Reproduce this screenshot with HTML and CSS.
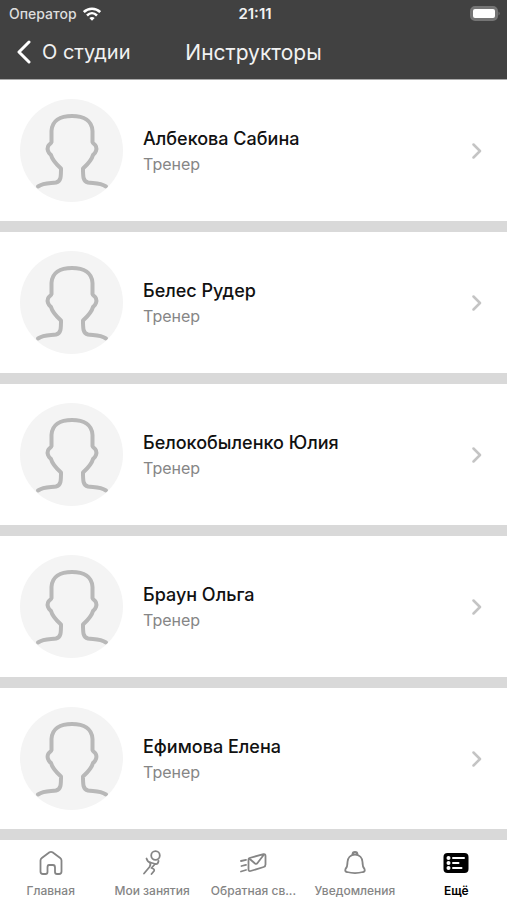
FILE: index.html
```html
<!DOCTYPE html>
<html lang="ru">
<head>
  <meta charset="UTF-8">
  <title>Инструкторы</title>
  <meta name="viewport" content="width=device-width, initial-scale=1.0">
  <link rel="stylesheet" href="styles.css">
</head>
<body>

  <!-- Shared icons -->
  <svg class="sprite" aria-hidden="true">
    <symbol id="person" viewBox="0 0 103 103">
      <path d="M18 87.500C24 83.500 31 84.500 36 83.500C41 82 41 78 41 69.500C36 65 32 60 31 56C28 54 27 50 28 47.500C29 45 31 45 31.500 43V32C32 22 40 17 52 17C64 17 72 22 72.500 32V43C73 45 75 45 76 47.500C77 50 76 54 73 56C72 60 68 65 63 69.500C63 78 63 82 68 83.500C73 84.500 80 83.500 86 87.500"/>
    </symbol>
    <symbol id="chevron" viewBox="0 0 10 16">
      <path d="M1.500 1.500L8 8L1.500 14.500"/>
    </symbol>
  </svg>

  <header class="header">
    <div class="status">
      <div class="carrier">
        <span>Оператор</span>
        <svg class="wifi" viewBox="0 0 18 14">
          <path d="M.8 5C5.300 .5 12.700 .5 17.200 5M4 8.500C7 5.500 11 5.500 14 8.500"/>
          <path class="dot" d="M6.300 11Q9 8.800 11.700 11L9 13.700Z"/>
        </svg>
      </div>
      <span class="time">21:11</span>
      <svg class="battery" viewBox="0 0 31 15">
        <rect class="case" x="1" y="1" width="26" height="13" rx="4"/>
        <rect class="level" x="3" y="3" width="22" height="9" rx="2"/>
        <path class="tip" d="M28.500 5.500Q31 7.500 28.500 9.500Z"/>
      </svg>
    </div>
    <nav class="navbar">
      <a class="back" href="#">
        <svg viewBox="0 0 16 24"><path d="M13 2L3 12L13 22"/></svg>
        <span>О студии</span>
      </a>
      <h1>Инструкторы</h1>
    </nav>
  </header>

  <main class="list">
    <a class="trainer" href="#">
      <svg class="avatar"><use href="#person"/></svg>
      <div class="info">
        <h2>Албекова Сабина</h2>
        <p>Тренер</p>
      </div>
      <svg class="chevron"><use href="#chevron"/></svg>
    </a>
    <a class="trainer" href="#">
      <svg class="avatar"><use href="#person"/></svg>
      <div class="info">
        <h2>Белес Рудер</h2>
        <p>Тренер</p>
      </div>
      <svg class="chevron"><use href="#chevron"/></svg>
    </a>
    <a class="trainer" href="#">
      <svg class="avatar"><use href="#person"/></svg>
      <div class="info">
        <h2>Белокобыленко Юлия</h2>
        <p>Тренер</p>
      </div>
      <svg class="chevron"><use href="#chevron"/></svg>
    </a>
    <a class="trainer" href="#">
      <svg class="avatar"><use href="#person"/></svg>
      <div class="info">
        <h2>Браун Ольга</h2>
        <p>Тренер</p>
      </div>
      <svg class="chevron"><use href="#chevron"/></svg>
    </a>
    <a class="trainer" href="#">
      <svg class="avatar"><use href="#person"/></svg>
      <div class="info">
        <h2>Ефимова Елена</h2>
        <p>Тренер</p>
      </div>
      <svg class="chevron"><use href="#chevron"/></svg>
    </a>
  </main>

  <!-- Bottom tabs -->
  <nav class="tabs">
    <a class="tab" href="#">
      <svg viewBox="0 0 28 28">
        <path d="M3.500 11.500Q3.500 10 4.800 9L12.500 3.300Q14 2.300 15.500 3.300L23.200 9Q24.500 10 24.500 11.500V22.500Q24.500 25 22 25H20Q18 25 18 23V18.500Q18 16 16 16H12Q10.500 16 10.500 18.500V23Q10.500 25 8.500 25H6Q3.500 25 3.500 22.500Z"/>
      </svg>
      <span>Главная</span>
    </a>
    <a class="tab" href="#">
      <svg viewBox="0 0 28 28">
        <circle cx="17.500" cy="6.500" r="4.300"/>
        <path d="M8.500 9.500Q9.500 13 12.500 13.500L17.500 15Q20 15.500 20.500 12M12 13.500Q13 15.500 11.500 18L6 24.500M17 15L13.500 19Q17 20 16 22L13.500 25"/>
      </svg>
      <span>Мои занятия</span>
    </a>
    <a class="tab" href="#">
      <svg viewBox="0 0 28 28">
        <path d="M10.500 9L24.500 5.200Q26.500 4.800 26.500 7V15.500Q26.500 17.500 24.700 18L11.500 22Q9.500 22.500 9.500 20.500V10.500Q9.500 9.300 10.500 9ZM10.500 9.800L16 14.500Q17.500 15.500 18.500 14L25 5.500M2 12L7 10.800M2.500 17L7 15.800M2 22.500L7 21"/>
      </svg>
      <span>Обратная св...</span>
    </a>
    <a class="tab" href="#">
      <svg viewBox="0 0 28 28">
        <path d="M14 5.500C18.500 5.500 21.500 9 21.500 13C21.500 17 22 18.500 23.500 20Q24.500 22.500 22 23Q14 25.200 6 23Q3.500 22.500 4.500 20C6 18.500 6.500 17 6.500 13C6.500 9 9.500 5.500 14 5.500ZM11.500 5.500Q11.500 3 14 3Q16.500 3 16.500 5.500"/>
      </svg>
      <span>Уведомления</span>
    </a>
    <a class="tab active" href="#">
      <svg viewBox="0 0 28 28">
        <rect class="card" x="1.500" y="4" width="25" height="20" rx="4"/>
        <g class="points">
          <circle cx="6.500" cy="9" r="2"/>
          <circle cx="6.500" cy="14" r="2"/>
          <circle cx="6.500" cy="19" r="2"/>
        </g>
        <path class="lines" d="M11 9H22M11 14H16.500M11 19H19.500"/>
      </svg>
      <span>Ещё</span>
    </a>
  </nav>

</body>
</html>
```
FILE: styles.css
```css
* { box-sizing: border-box; }

body {
  display: flex;
  flex-direction: column;
  min-height: 100vh;
  margin: 0;
  background-color: #fff;
  color: #111;
  font-family: Inter, "Liberation Sans", sans-serif;
}

a { color: inherit; text-decoration: none; }
h1, h2, p { margin: 0; }

svg {
  flex: none;
  fill: none;
  stroke: currentColor;
  stroke-linecap: round;
  stroke-linejoin: round;
}

.sprite { display: none; }

/* Header */
.header {
  background-color: #414141;
  border-bottom: 1px solid #aaa;
  color: #f2f2f2;
}

.status {
  display: grid;
  grid-template-columns: 1fr auto 1fr;
  align-items: center;
  height: 27px;
  padding: 0 6px 0 9px;
  font-size: 15px;
}

.carrier {
  display: flex;
  align-items: center;
  gap: 6px;
  color: #ddd;
  font-size: 14px;
  font-weight: 500;
}

.time { font-weight: 600; }

.wifi { width: 18px; height: 14px; color: #fff; stroke-width: 2.5; stroke-linecap: butt; }
.wifi .dot { fill: #fff; stroke: none; }

.battery { width: 31px; height: 15px; justify-self: end; }
.battery .case { stroke: #757575; stroke-width: 2; fill: #757575; }
.battery .level { fill: #fff; stroke: none; }
.battery .tip { fill: #757575; stroke: none; }

.navbar {
  display: grid;
  grid-template-columns: 1fr auto 1fr;
  align-items: center;
  height: 52px;
  padding: 0 16px 2px;
}

.back { display: flex; align-items: center; gap: 10px; font-size: 20px; }
.back svg { width: 16px; height: 24px; color: #fff; stroke-width: 3; }
.navbar h1 { font-size: 21px; font-weight: 400; }

/* Trainer list */
.list { flex: 1; }

.trainer {
  display: flex;
  align-items: center;
  gap: 20px;
  padding: 19px 25px 19px 20px;
  border-bottom: 11px solid #d9d9d9;
}

.avatar {
  width: 103px;
  height: 103px;
  border-radius: 50%;
  background-color: #f4f4f4;
  color: #b8b8b8;
  stroke-width: 4;
}

.info { flex: 1; min-width: 0; }
.info h2 { font-size: 18px; line-height: 26px; font-weight: 500; }
.info p { font-size: 16px; line-height: 24px; color: #868686; }

.chevron { width: 10px; height: 16px; color: #c4c4c4; stroke-width: 2.5; }

/* Bottom tabs */
.tabs {
  position: sticky;
  bottom: 0;
  display: grid;
  grid-template-columns: repeat(5, minmax(0, 1fr));
  background-color: #fff;
}

.tab {
  display: flex;
  flex-direction: column;
  align-items: center;
  gap: 5px;
  height: 60px;
  padding: 9px 5px 0;
  color: #858585;
  font-size: 12px;
  font-weight: 500;
  line-height: 18px;
  white-space: nowrap;
}

.tab svg { width: 28px; height: 28px; stroke-width: 1.8; }

.tab.active { color: #000; font-weight: 600; }
.tab .card { fill: #000; stroke: none; }
.tab .points { fill: #fff; stroke: none; }
.tab .lines { stroke: #fff; stroke-width: 2; }
```
